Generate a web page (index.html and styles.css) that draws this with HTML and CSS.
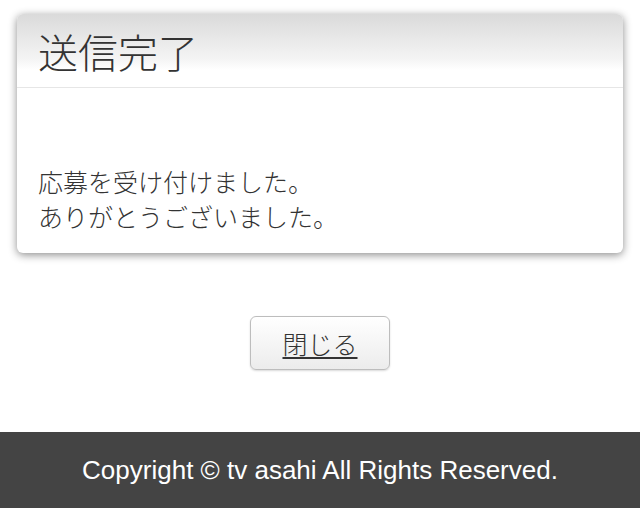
FILE: index.html
```html
<!DOCTYPE html>
<html lang="ja">
<head>
<meta charset="utf-8">
<title>送信完了</title>
<link rel="stylesheet" href="styles.css">
</head>
<body>
<main class="main">
  <section class="card">
    <header class="card-head">
      <h1 class="title">送信完了</h1>
    </header>
    <div class="card-body">
      <p class="message">応募を受け付けました。<br>ありがとうございました。</p>
    </div>
  </section>
  <div class="actions">
    <a class="btn" href="#">閉じる</a>
  </div>
</main>
<footer class="footer">Copyright © tv asahi All Rights Reserved.</footer>
</body>
</html>
```

FILE: styles.css
```css
html, body {
  margin: 0;
  padding: 0;
  background: #fff;
}
body {
  font-family: "Noto Sans CJK JP", "Noto Sans", sans-serif;
  color: #333;
  height: 508px;
  display: flex;
  flex-direction: column;
}
.main {
  flex: 1;
  padding: 14px 17px 0 17px;
}
.card {
  background: #fff;
  border-radius: 6px;
  box-shadow: 0 2px 9px rgba(0, 0, 0, 0.45);
  overflow: hidden;
}
.card-head {
  height: 73px;
  background: linear-gradient(#dadada 0px, #f4f4f4 45px, #fff 56px, #fff 100%);
  border-bottom: 1px solid #e6e6e6;
  display: flex;
  align-items: center;
  padding-left: 21px;
}
.title {
  margin: 0;
  font-size: 40px;
  font-weight: 300;
  color: #333;
  line-height: 1;
}
.card-body {
  padding: 76px 21px 19px 21px;
}
.message {
  margin: 0;
  font-size: 25px;
  font-weight: 300;
  line-height: 35px;
  color: #333;
}
.actions {
  display: flex;
  justify-content: center;
  padding-top: 63px;
}
.btn {
  width: 138px;
  height: 52px;
  border: 1px solid #bdbdbd;
  border-radius: 6px;
  background: linear-gradient(#ffffff, #ececec);
  box-shadow: 0 1px 2px rgba(0, 0, 0, 0.15);
  display: flex;
  align-items: center;
  justify-content: center;
  font-size: 25px;
  font-weight: 300;
  color: #333;
  text-decoration: underline;
  text-underline-offset: 3px;
}
.footer {
  height: 76px;
  background: #444;
  color: #fff;
  font-family: "Liberation Sans", Arial, sans-serif;
  font-size: 26px;
  display: flex;
  align-items: center;
  justify-content: center;
}
```
